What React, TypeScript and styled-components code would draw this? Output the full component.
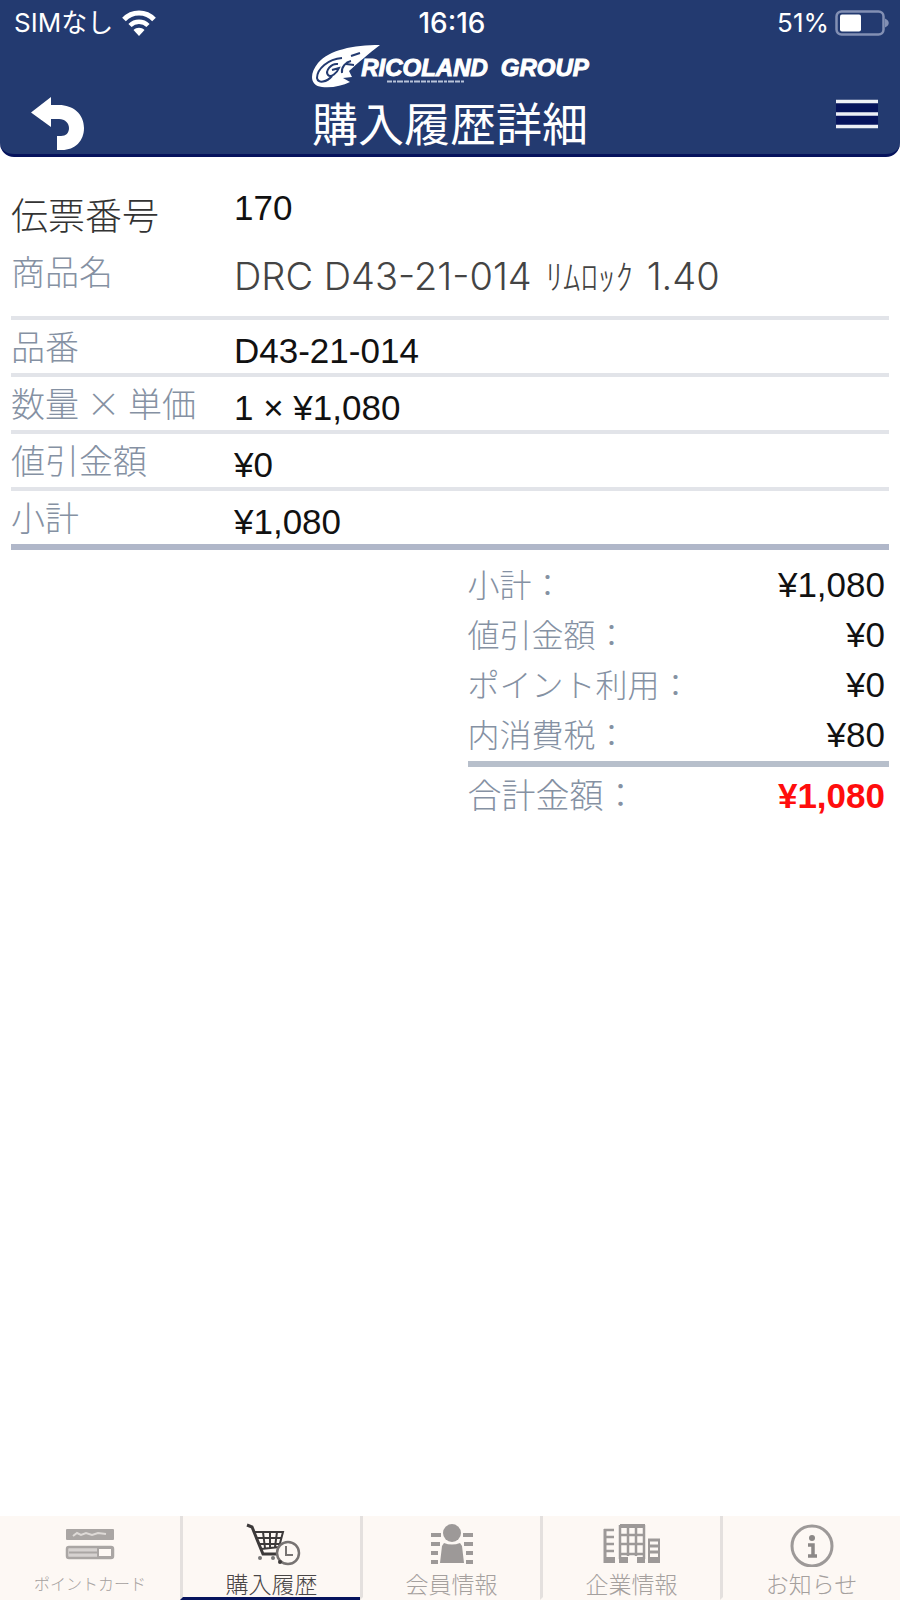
import React from "react";
import styled, { createGlobalStyle } from "styled-components";

const colors = {
  navy: "#233a70",
  edge: "#06135c",
  label: "#8591a3",
  rule: "#e2e4e9",
  strongRule: "#b0b7c9",
  red: "#ff0d0d",
  tabBg: "#fdf8f4",
  tabRule: "#e4e0de",
  tabText: "#a5a09e",
};

const jp = `"Noto Sans CJK JP", sans-serif`;

const GlobalStyle = createGlobalStyle`
  * { box-sizing: border-box; }
  body {
    margin: 0;
    background: #fff;
    color: #111;
    font-family: "Liberation Sans", ${jp};
  }
  button { border: 0; padding: 0; background: none; cursor: pointer; }
  svg { display: block; flex-shrink: 0; }
`;

const Screen = styled.div`
  display: flex;
  flex-direction: column;
  min-height: 100vh;
`;

const Header = styled.header`
  background: ${colors.navy};
  border-bottom: 3px solid ${colors.edge};
  border-radius: 0 0 14px 14px;
  color: #fff;
`;

const StatusBar = styled.div`
  display: grid;
  grid-template-columns: 1fr auto 1fr;
  align-items: center;
  height: 44px;
  padding: 2px 10px 0 14px;
  font-family: Inter, ${jp};
  font-size: 26px;
  line-height: 32px;
`;

const Carrier = styled.div`
  display: flex;
  align-items: center;
  gap: 9px;
`;

const Clock = styled.time`
  font-size: 28px;
  font-weight: 500;
`;

const Power = styled.div`
  display: flex;
  align-items: center;
  justify-content: flex-end;
  gap: 6px;
`;

const TitleBar = styled.div`
  display: grid;
  grid-template-columns: 1fr auto 1fr;
  align-items: start;
  height: 110px;
  padding: 0 22px;
`;

const HeaderButton = styled.button<{ $side: "left" | "right" }>`
  justify-self: ${(p) => (p.$side === "left" ? "start" : "end")};
  margin-top: 53px;
  padding-left: ${(p) => (p.$side === "left" ? 9 : 0)}px;
`;

const Brand = styled.div`
  display: flex;
  flex-direction: column;
  align-items: center;
`;

const Logo = styled.div`
  display: flex;
  align-items: center;
  height: 46px;
`;

const Wordmark = styled.div`
  display: flex;
  flex-direction: column;
  margin-left: -20px;
  padding-top: 5px;
`;

const LogoText = styled.span`
  display: flex;
  gap: 13px;
  font-size: 24px;
  font-weight: 700;
  font-style: italic;
  line-height: 24px;
  -webkit-text-stroke: 1px #fff;
`;

const Tagline = styled.div`
  padding-left: 26px;
`;

const PageTitle = styled.h1`
  margin: 0;
  font-family: ${jp};
  font-size: 46px;
  font-weight: 400;
  line-height: 62px;
`;

const Main = styled.main`
  flex: 1;
  padding: 23px 11px 0;
`;

const List = styled.dl`
  margin: 0;
`;

const Row = styled.div<{ $height: number; $rule?: string; $thick?: boolean }>`
  display: flex;
  height: ${(p) => p.$height}px;
  border-bottom: ${(p) => (p.$rule ? `${p.$thick ? 6 : 4}px solid ${p.$rule}` : "0")};
`;

const Label = styled.dt<{ $main?: boolean }>`
  width: 223px;
  padding-top: ${(p) => (p.$main ? 12 : 4)}px;
  color: ${(p) => (p.$main ? "#333" : colors.label)};
  font-family: ${jp};
  font-size: ${(p) => (p.$main ? 37 : 34)}px;
  font-weight: 300;
  line-height: 44px;
  white-space: nowrap;
`;

const Value = styled.dd<{ $raised?: boolean; $wide?: boolean }>`
  flex: 1;
  margin: 0;
  padding-top: ${(p) => (p.$raised ? 6 : 9)}px;
  color: ${(p) => (p.$wide ? "#444" : "#111")};
  font-family: ${(p) => (p.$wide ? `Inter, ${jp}` : `"Liberation Sans", ${jp}`)};
  font-size: ${(p) => (p.$wide ? 38 : 35)}px;
  font-weight: ${(p) => (p.$wide ? 300 : 400)};
  line-height: 44px;
`;

const Kana = styled.span`
  margin: 0 3px;
  font-size: 35px;
`;

const Totals = styled.dl`
  width: 48%;
  margin: 10px 0 0 auto;
`;

const TotalRow = styled.div<{ $grand?: boolean }>`
  display: flex;
  justify-content: space-between;
  height: 50px;
  padding-right: 4px;
  font-size: ${(p) => (p.$grand ? 34 : 32)}px;
`;

const TotalRule = styled.div`
  height: 6px;
  margin: 1px 0 4px;
  background: #b7bfcb;
`;

const TotalLabel = styled.dt`
  color: ${colors.label};
  font-family: ${jp};
  font-weight: 300;
  line-height: 46px;
`;

const Amount = styled.dd<{ $grand?: boolean }>`
  margin: 0;
  color: ${(p) => (p.$grand ? colors.red : "#111")};
  font-size: 35px;
  font-weight: ${(p) => (p.$grand ? 700 : 400)};
  line-height: 50px;
`;

const TabBar = styled.nav`
  display: grid;
  grid-template-columns: repeat(5, 1fr);
  background: ${colors.tabBg};
`;

const Tab = styled.a<{ $active?: boolean; $small?: boolean }>`
  display: flex;
  flex-direction: column;
  align-items: center;
  height: 84px;
  padding: 5px 0 0;
  border-bottom: 3px solid ${(p) => (p.$active ? colors.edge : "transparent")};
  color: ${(p) => (p.$active ? "#4a4646" : colors.tabText)};
  font-family: ${jp};
  font-size: ${(p) => (p.$small ? 16 : 23)}px;
  font-weight: 300;
  line-height: 32px;
  text-decoration: none;
  white-space: nowrap;
  & + & {
    border-left: 3px solid ${colors.tabRule};
  }
`;

const WifiIcon = () => (
  <svg width="34" height="26" viewBox="0 0 34 26" fill="none" stroke="#fff">
    <path d="M2 9.5C10 .8 24 .8 32 9.5" strokeWidth="5" />
    <path d="M8 15.5c5-5 13-5 18 0" strokeWidth="4.5" />
    <path d="M17 26l-5.5-6c3-3 8-3 11 0z" fill="#fff" stroke="none" />
  </svg>
);

const BatteryIcon = () => (
  <svg width="55" height="26" viewBox="0 0 55 26" fill="none">
    <rect x="1.5" y="1.5" width="47" height="23" rx="5" stroke="#8390b4" strokeWidth="2.5" />
    <rect x="5" y="4.5" width="21" height="17" rx="2" fill="#fff" />
    <path d="M50 8.5c5 2 5 7 0 9z" fill="#8390b4" />
  </svg>
);

const BackIcon = () => (
  <svg width="54" height="54" viewBox="0 0 54 54">
    <path
      d="M0 15.5L20 0v8h8c14 0 25 9 25 23 0 13-9 22-22 22h-5V39h4c5 0 8-3 8-8s-4-9-10-9h-8v8z"
      fill="#fff"
    />
  </svg>
);

const MenuIcon = () => (
  <svg width="42" height="34" viewBox="0 0 42 34">
    <path d="M0 4h42v25H0z" fill="#06135c" />
    <path d="M0 4.500h42M0 17h42M0 29.500h42" stroke="#eceef6" strokeWidth="3.500" />
  </svg>
);

const CometIcon = () => (
  <svg width="70" height="46" viewBox="0 0 70 46">
    <path
      d="M69 1C42 1 18 6 7 19c-9 11-8 23 4 24 10 1 20-1 28-5l-7-4 9-1-3-6c8-7 20-18 31-26z"
      fill="#fff"
    />
    <path
      d="M31 14C17 15 6 25 6 34c1 6 10 4 15-2M27 20c-7-1-13 7-10 11 3 3 9-2 11-7l-7 2M31 29c-1-6 4-11 9-12M35 20l8 1M40 12l9-3"
      fill="none"
      stroke="#233a70"
      strokeWidth="2"
    />
  </svg>
);

const TaglineMark = () => (
  <svg width="78" height="4" viewBox="0 0 78 4">
    <path d="M0 1.500h78" stroke="#b8c2d8" strokeWidth="2" strokeDasharray="5 1 3 1 6 1" />
  </svg>
);

const CardIcon = () => (
  <svg width="58" height="46" viewBox="0 0 58 46" fill="none">
    <rect x="5" y="8" width="48" height="11" rx="1" fill="#aaa6a4" />
    <path d="M12 15l4-3 4 2 5-2 6 2 6-2 8 1" stroke="#dedad7" strokeWidth="2" />
    <rect x="6" y="26" width="46" height="11" rx="2" fill="#d6d2d0" stroke="#aaa6a4" strokeWidth="2.500" />
    <path d="M8 31.500h28" stroke="#aaa6a4" strokeWidth="2" />
    <rect x="37" y="27" width="14" height="9" fill="#fdf8f4" stroke="#aaa6a4" strokeWidth="2" />
  </svg>
);

const CartIcon = () => (
  <svg width="58" height="46" viewBox="0 0 58 46" fill="none" stroke="#3d3a3a">
    <path d="M4 4l5 2 11 27h15" strokeWidth="3" />
    <path d="M10 11h30l-4 15-18 2M13 17h25M15 23h22M20 11l2 16M27 11v16M34 11l-2 15" strokeWidth="2" />
    <circle cx="17" cy="37" r="2" fill="#777" stroke="none" />
    <circle cx="30" cy="37" r="2" fill="#777" stroke="none" />
    <circle cx="45" cy="32" r="11" fill="#fdf8f4" stroke="#777372" strokeWidth="2.500" />
    <path d="M43 25v9h7" stroke="#777372" strokeWidth="2" />
    <circle cx="37" cy="41" r="2" fill="#3d3a3a" stroke="none" />
  </svg>
);

const MemberIcon = () => (
  <svg width="58" height="46" viewBox="0 0 58 46" fill="#9d9998">
    <circle cx="29" cy="12" r="9" />
    <path d="M21 22q8 3 16 0l2 3 2 17H17l2-17z" />
    <path d="M8 14h10M8 23h9M8 32h7M8 41h7M40 14h10M41 23h9M43 32h7M43 41h7" stroke="#9d9998" strokeWidth="4" />
  </svg>
);

const CompanyIcon = () => (
  <svg width="58" height="46" viewBox="0 0 58 46" fill="none" stroke="#9d9998">
    <path d="M1 9h10M1 16h10M1 23h10M1 30h10" strokeWidth="2.500" />
    <path d="M2 8v34" strokeWidth="3" />
    <path d="M1 39h11M16 39h9M34 39h8M46 39h11" strokeWidth="6" />
    <path d="M17 5h25" strokeWidth="4" />
    <path d="M17 4v34M25 4v31M33 4v31M41 4v34M16 14h26M16 23h26M16 33h26" strokeWidth="2.500" />
    <path d="M45 19h12M45 25h11M45 31h11" strokeWidth="3" />
    <path d="M56 18v24M46 18v24" strokeWidth="2" />
  </svg>
);

const InfoIcon = () => (
  <svg width="58" height="46" viewBox="0 0 58 46" fill="none" stroke="#9d9998">
    <circle cx="29" cy="25" r="20" strokeWidth="3" />
    <circle cx="29" cy="17" r="3" fill="#8c8887" stroke="none" />
    <path d="M25 24h5v11M25 35h9" stroke="#8c8887" strokeWidth="3.500" />
  </svg>
);

type Item = {
  label: string;
  value: React.ReactNode;
  wide?: boolean;
  height: number;
  rule: string;
  thick?: boolean;
};

const items: Item[] = [
  {
    label: "商品名",
    value: (
      <>
        DRC D43-21-014 <Kana>ﾘﾑﾛｯｸ</Kana> 1.40
      </>
    ),
    wide: true,
    height: 75,
    rule: colors.rule,
  },
  { label: "品番", value: "D43-21-014", height: 57, rule: colors.rule },
  { label: "数量 × 単価", value: "1 × ¥1,080", height: 57, rule: colors.rule },
  { label: "値引金額", value: "¥0", height: 57, rule: colors.rule },
  { label: "小計", value: "¥1,080", height: 59, rule: colors.strongRule, thick: true },
];

const totals = [
  { label: "小計：", value: "¥1,080" },
  { label: "値引金額：", value: "¥0" },
  { label: "ポイント利用：", value: "¥0" },
  { label: "内消費税：", value: "¥80" },
];

const tabs = [
  { label: "ポイントカード", Icon: CardIcon, small: true },
  { label: "購入履歴", Icon: CartIcon, active: true },
  { label: "会員情報", Icon: MemberIcon },
  { label: "企業情報", Icon: CompanyIcon },
  { label: "お知らせ", Icon: InfoIcon },
];

export default function App() {
  return (
    <Screen>
      <GlobalStyle />
      <Header>
        <StatusBar>
          <Carrier>
            <span>SIMなし</span>
            <WifiIcon />
          </Carrier>
          <Clock>16:16</Clock>
          <Power>
            <span>51%</span>
            <BatteryIcon />
          </Power>
        </StatusBar>
        <TitleBar>
          <HeaderButton type="button" aria-label="戻る" $side="left">
            <BackIcon />
          </HeaderButton>
          <Brand>
            <Logo>
              <CometIcon />
              <Wordmark>
                <LogoText>
                  <span>RICOLAND</span>
                  <span>GROUP</span>
                </LogoText>
                <Tagline>
                  <TaglineMark />
                </Tagline>
              </Wordmark>
            </Logo>
            <PageTitle>購入履歴詳細</PageTitle>
          </Brand>
          <HeaderButton type="button" aria-label="メニュー" $side="right">
            <MenuIcon />
          </HeaderButton>
        </TitleBar>
      </Header>

      <Main>
        <List>
          <Row $height={65}>
            <Label $main>伝票番号</Label>
            <Value $raised>170</Value>
          </Row>
          {items.map((item) => (
            <Row key={item.label} $height={item.height} $rule={item.rule} $thick={item.thick}>
              <Label>{item.label}</Label>
              <Value $wide={item.wide}>{item.value}</Value>
            </Row>
          ))}
        </List>
        <Totals>
          {totals.map((t) => (
            <TotalRow key={t.label}>
              <TotalLabel>{t.label}</TotalLabel>
              <Amount>{t.value}</Amount>
            </TotalRow>
          ))}
          <TotalRule role="presentation" />
          <TotalRow $grand>
            <TotalLabel>合計金額：</TotalLabel>
            <Amount $grand>¥1,080</Amount>
          </TotalRow>
        </Totals>
      </Main>

      <TabBar>
        {tabs.map(({ label, Icon, active, small }) => (
          <Tab key={label} href="#" $active={active} $small={small} aria-current={active ? "page" : undefined}>
            <Icon />
            {label}
          </Tab>
        ))}
      </TabBar>
    </Screen>
  );
}
